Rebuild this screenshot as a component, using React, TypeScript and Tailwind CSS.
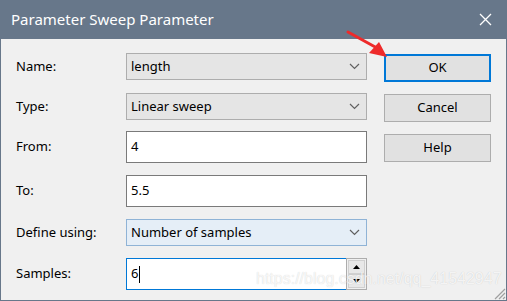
import { ReactNode } from 'react'

const font = { fontFamily: '"Noto Sans", "Liberation Sans", sans-serif' }

function Chevron() {
    return (
        <svg width="11" height="7" viewBox="0 0 11 7" className="mr-[6px]">
            <path d="M1 1 L5.5 5.5 L10 1" fill="none" stroke="#606060" strokeWidth="1.2" />
        </svg>
    )
}

function Row({ label, top, children }: { label: string; top: number; children: ReactNode }) {
    return (
        <div className="flex items-center" style={{ marginTop: top }}>
            <div className="w-[110px] text-[13px] text-[#000]">{label}</div>
            {children}
        </div>
    )
}

function Combo({ value, active }: { value: string; active?: boolean }) {
    return (
        <div
            className={`flex h-[27px] w-[241px] items-center justify-between border pl-[4px] text-[13px] ${
                active ? 'border-[#8fb3d6] bg-[#e5eef7]' : 'border-[#adadad] bg-[#e5e5e5]'
            }`}
        >
            <span>{value}</span>
            <Chevron />
        </div>
    )
}

function Field({ value }: { value: string }) {
    return (
        <div className="flex h-[32px] w-[241px] items-center border border-[#7a7a7a] bg-white pl-[4px] text-[13px]">
            {value}
        </div>
    )
}

function Btn({ label, primary }: { label: string; primary?: boolean }) {
    return (
        <div
            className={`flex h-[28px] w-[107px] items-center justify-center bg-[#e1e1e1] text-[13px] ${
                primary ? 'border-2 border-[#0078d7]' : 'border border-[#adadad]'
            }`}
        >
            {label}
        </div>
    )
}

export default function App() {
    return (
        <div className="relative h-[301px] w-[507px] overflow-hidden border border-t-0 border-[#67778a] bg-[#f0f0f0] text-black" style={font}>
            <div className="flex h-[39px] items-center justify-between bg-[#67778a] pl-[10px] pr-[14px] text-[15px] text-white">
                <span>Parameter Sweep Parameter</span>
                <svg width="13" height="13" viewBox="0 0 13 13">
                    <path d="M1 1 L12 12 M12 1 L1 12" stroke="#fff" strokeWidth="1.3" />
                </svg>
            </div>

            <div className="flex">
                <div className="pl-[15px]">
                    <Row label="Name:" top={14}>
                        <Combo value="length" />
                    </Row>
                    <Row label="Type:" top={13}>
                        <Combo value="Linear sweep" />
                    </Row>
                    <Row label="From:" top={11}>
                        <Field value="4" />
                    </Row>
                    <Row label="To:" top={12}>
                        <Field value="5.5" />
                    </Row>
                    <Row label="Define using:" top={12}>
                        <Combo value="Number of samples" active />
                    </Row>
                    <Row label="Samples:" top={12}>
                        <div className="flex h-[32px] w-[241px]">
                            <div className="flex flex-1 items-center border border-[#0078d7] border-r-0 bg-white pl-[4px] text-[13px]">
                                6<span className="ml-[1px] h-[17px] w-px bg-black" />
                            </div>
                            <div className="flex w-[21px] flex-col border border-[#adadad] bg-[#f0f0f0] p-px">
                                <div className="flex flex-1 items-center justify-center border border-[#d0d0d0] bg-[#e8e8e8]">
                                    <svg width="7" height="4" viewBox="0 0 7 4"><path d="M0 4 L3.5 0 L7 4Z" fill="#000" /></svg>
                                </div>
                                <div className="flex flex-1 items-center justify-center border border-[#d0d0d0] bg-[#e8e8e8]">
                                    <svg width="7" height="4" viewBox="0 0 7 4"><path d="M0 0 L3.5 4 L7 0Z" fill="#000" /></svg>
                                </div>
                            </div>
                        </div>
                    </Row>
                </div>

                <div className="ml-[17px] mt-[15px] flex flex-col gap-[12px]">
                    <Btn label="OK" primary />
                    <Btn label="Cancel" />
                    <Btn label="Help" />
                </div>
            </div>

            {/* red annotation arrow */}
            <svg className="absolute left-[340px] top-[28px]" width="52" height="34" viewBox="0 0 52 34">
                <path d="M7 4 L36 20" stroke="#ee2a2a" strokeWidth="3" strokeLinecap="round" />
                <path d="M46 29 L28 25 L38 14 Z" fill="#ee2a2a" />
            </svg>

            {/* watermark */}
            <div
                className="absolute left-[255px] top-[271px] whitespace-nowrap text-[16px] leading-none text-white/80"
                style={{ fontFamily: '"Liberation Sans", Arial, sans-serif', textShadow: '0 0 1px rgba(0,0,0,0.2)' }}
            >
                https://blog.csdn.net/qq_41542947
            </div>

            {/* resize grip */}
            <svg className="absolute bottom-0 right-0" width="14" height="14" viewBox="0 0 14 14">
                <path d="M13 3 L3 13 M13 7 L7 13 M13 11 L11 13" stroke="#a0a0a0" strokeWidth="1.2" />
            </svg>
        </div>
    )
}
